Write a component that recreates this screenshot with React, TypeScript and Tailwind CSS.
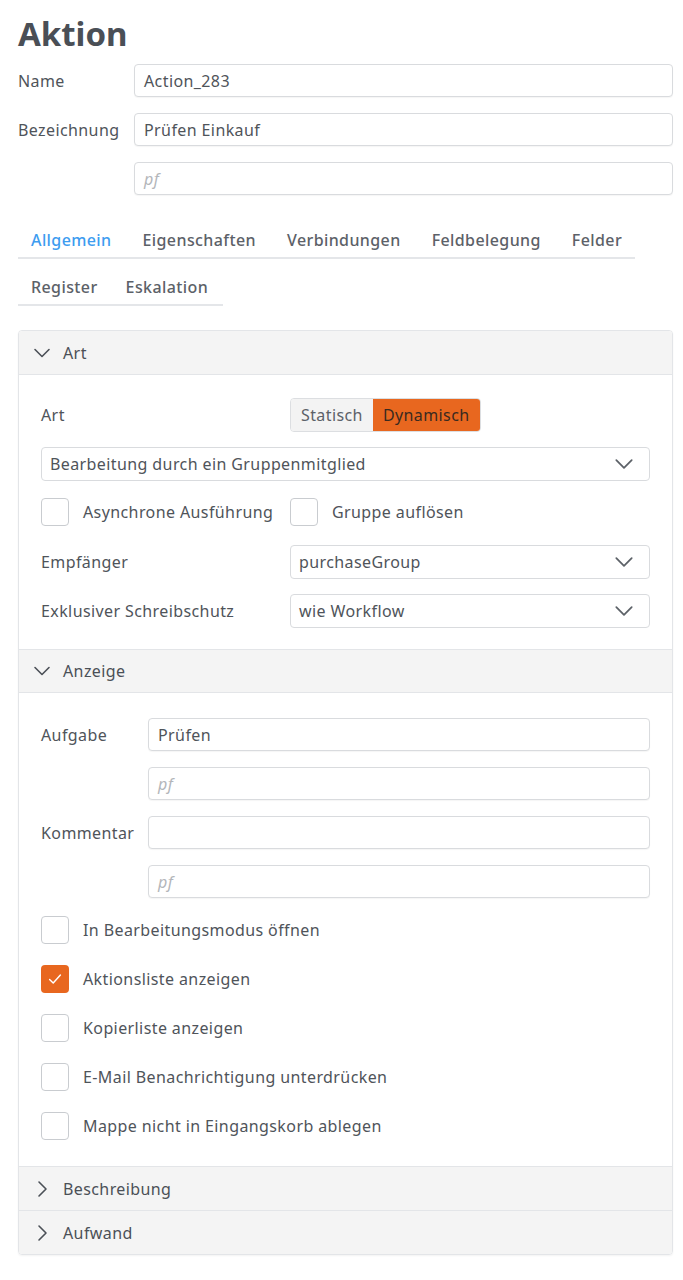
import React from "react";

const font = { fontFamily: '"Noto Sans", "Open Sans", sans-serif', letterSpacing: "0.025em" };

function Chevron({ dir = "down", className = "" }: { dir?: "down" | "right"; className?: string }) {
  return (
    <svg viewBox="0 0 20 20" className={className} fill="none" stroke="currentColor" strokeWidth={1.6} strokeLinecap="round" strokeLinejoin="round">
      {dir === "down" ? <path d="M3 6.5 L10 13.5 L17 6.5" /> : <path d="M7 3 L14 10 L7 17" />}
    </svg>
  );
}

function TextInput({ value, placeholder }: { value?: string; placeholder?: string }) {
  return (
    <div className="h-[33px] flex-1 rounded-[4px] border border-[#d9dbde] bg-white px-[9px] flex items-center text-[16px] text-[#4f545a] shadow-[0_1px_1px_rgba(0,0,0,0.04)]">
      {value ? <span>{value}</span> : <span className="italic text-[#b3b6ba]">{placeholder}</span>}
    </div>
  );
}

function Select({ value }: { value: string }) {
  return (
    <div className="h-[34px] flex-1 rounded-[4px] border border-[#d9dbde] bg-white pl-[8px] pr-[14px] flex items-center justify-between text-[16px] text-[#4f545a]">
      <span>{value}</span>
      <Chevron className="w-[22px] h-[22px] text-[#5d6268]" />
    </div>
  );
}

function Checkbox({ checked, label }: { checked?: boolean; label: string }) {
  return (
    <div className="flex items-center">
      {checked ? (
        <div className="w-[28px] h-[28px] rounded-[4px] bg-[#e8671f] flex items-center justify-center">
          <svg viewBox="0 0 20 20" className="w-[18px] h-[18px]" fill="none" stroke="white" strokeWidth={1.6} strokeLinecap="round" strokeLinejoin="round">
            <path d="M4 10.5 L8 14.5 L16 5.5" />
          </svg>
        </div>
      ) : (
        <div className="w-[28px] h-[28px] rounded-[4px] border border-[#c9ccd0] bg-white" />
      )}
      <span className="ml-[14px] text-[16px] text-[#4f545a]">{label}</span>
    </div>
  );
}

function SectionHeader({ title, open, top }: { title: string; open?: boolean; top?: boolean }) {
  return (
    <div className={`h-[44px] bg-[#f4f4f4] flex items-center pl-[13px] ${top ? "" : "border-t border-[#e3e5e8]"} ${open ? "border-b border-[#e3e5e8]" : ""}`}>
      <Chevron dir={open ? "down" : "right"} className="w-[20px] h-[20px] text-[#4b5057]" />
      <span className="ml-[11px] text-[16px] text-[#4b5057]">{title}</span>
    </div>
  );
}

export default function App() {
  const tabs1 = ["Allgemein", "Eigenschaften", "Verbindungen", "Feldbelegung", "Felder"];
  const tabs2 = ["Register", "Eskalation"];
  return (
    <div className="w-[683px] min-h-[1280px] bg-white text-[#4f545a]" style={font}>
      <div className="pl-[18px] pr-[10px] pt-[14px]">
        <h1 className="text-[33px] leading-[40px] font-bold text-[#4a4f56]" style={{ letterSpacing: "0" }}>Aktion</h1>

        <div className="mt-[10px] flex flex-col gap-[16px]">
          <div className="flex items-center">
            <span className="w-[116px] text-[16px]">Name</span>
            <TextInput value="Action_283" />
          </div>
          <div className="flex items-center">
            <span className="w-[116px] text-[16px]">Bezeichnung</span>
            <TextInput value="Prüfen Einkauf" />
          </div>
          <div className="flex items-center">
            <span className="w-[116px]" />
            <TextInput placeholder="pf" />
          </div>
        </div>

        <div className="mt-[34px] w-[617px] border-b-2 border-[#e4e6e9] flex pl-[13px] gap-[31px] h-[30px] items-start">
          {tabs1.map((t, i) => (
            <span key={t} className={`text-[16px] leading-[22px] font-medium ${i === 0 ? "text-[#3d9cf0]" : "text-[#5c6168]"}`}>{t}</span>
          ))}
        </div>
        <div className="mt-[17px] w-[205px] border-b-2 border-[#e4e6e9] flex pl-[13px] gap-[28px] h-[30px] items-start">
          {tabs2.map((t) => (
            <span key={t} className="text-[16px] leading-[22px] font-medium text-[#5c6168]">{t}</span>
          ))}
        </div>

        <div className="mt-[24px] w-[655px] rounded-[4px] border border-[#e3e5e8] overflow-hidden shadow-[0_1px_2px_rgba(0,0,0,0.05)]">
          <SectionHeader title="Art" open top />
          <div className="px-[22px] pt-[23px] pb-[21px] flex flex-col">
            <div className="flex items-center">
              <span className="w-[249px] text-[16px]">Art</span>
              <div className="flex h-[34px] rounded-[4px] border border-[#dcdee1] overflow-hidden text-[16px]">
                <span className="px-[10px] bg-[#f3f3f3] text-[#5c6168] flex items-center">Statisch</span>
                <span className="px-[10px] bg-[#e8671f] text-[#3a2a20] flex items-center">Dynamisch</span>
              </div>
            </div>
            <div className="mt-[15px] flex">
              <Select value="Bearbeitung durch ein Gruppenmitglied" />
            </div>
            <div className="mt-[17px] flex items-center">
              <div className="w-[249px]"><Checkbox label="Asynchrone Ausführung" /></div>
              <Checkbox label="Gruppe auflösen" />
            </div>
            <div className="mt-[19px] flex items-center">
              <span className="w-[249px] text-[16px]">Empfänger</span>
              <Select value="purchaseGroup" />
            </div>
            <div className="mt-[15px] flex items-center">
              <span className="w-[249px] text-[16px]">Exklusiver Schreibschutz</span>
              <Select value="wie Workflow" />
            </div>
          </div>

          <SectionHeader title="Anzeige" open />
          <div className="px-[22px] pt-[25px] pb-[26px] flex flex-col">
            <div className="flex flex-col gap-[16px]">
              <div className="flex items-center">
                <span className="w-[107px] text-[16px]">Aufgabe</span>
                <TextInput value="Prüfen" />
              </div>
              <div className="flex items-center">
                <span className="w-[107px]" />
                <TextInput placeholder="pf" />
              </div>
              <div className="flex items-center">
                <span className="w-[107px] text-[16px]">Kommentar</span>
                <TextInput />
              </div>
              <div className="flex items-center">
                <span className="w-[107px]" />
                <TextInput placeholder="pf" />
              </div>
            </div>
            <div className="mt-[18px] flex flex-col gap-[21px]">
              <Checkbox label="In Bearbeitungsmodus öffnen" />
              <Checkbox checked label="Aktionsliste anzeigen" />
              <Checkbox label="Kopierliste anzeigen" />
              <Checkbox label="E-Mail Benachrichtigung unterdrücken" />
              <Checkbox label="Mappe nicht in Eingangskorb ablegen" />
            </div>
          </div>

          <SectionHeader title="Beschreibung" />
          <SectionHeader title="Aufwand" />
        </div>
      </div>
    </div>
  );
}
